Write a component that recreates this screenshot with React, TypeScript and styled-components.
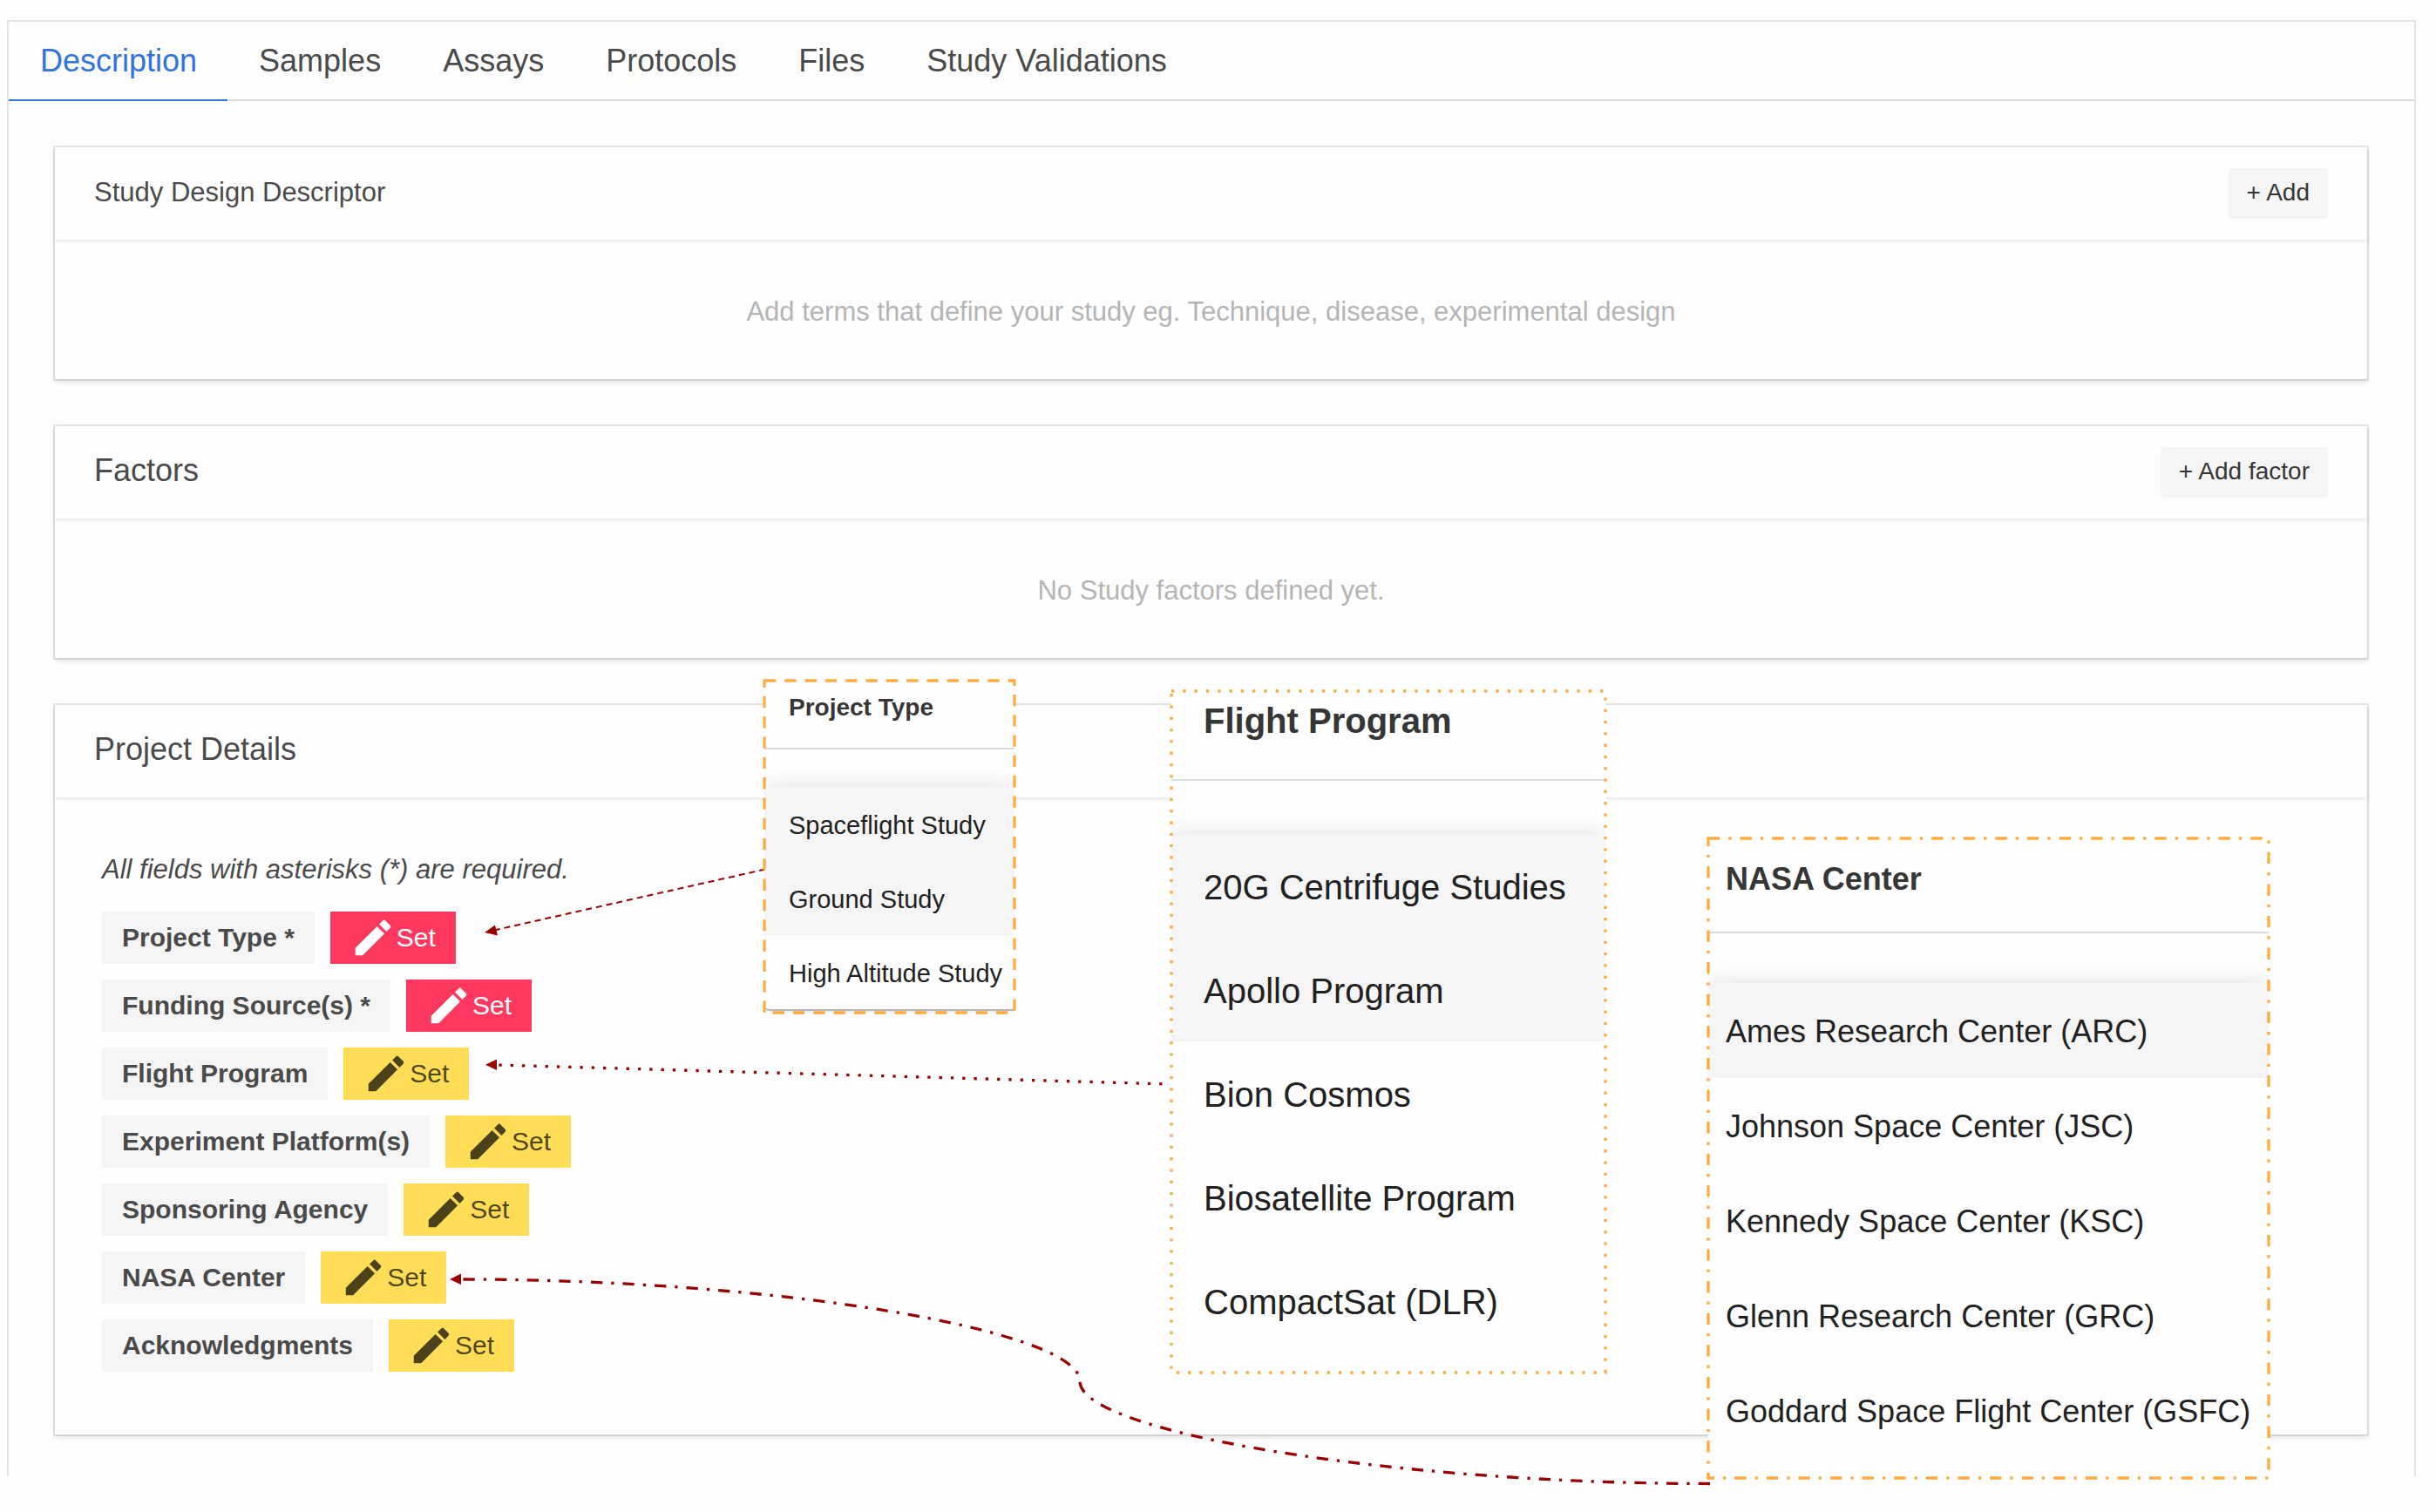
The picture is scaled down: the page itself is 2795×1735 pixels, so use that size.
import React from "react";
import styled, { createGlobalStyle, css } from "styled-components";

const GlobalStyle = createGlobalStyle`
  *, *::before, *::after { box-sizing: border-box; }
  body {
    margin: 0;
    background: #fefefe;
    color: #4a4a4a;
    font-family: "Liberation Sans", Arial, Helvetica, sans-serif;
    font-size: 31px;
  }
  button { font-family: inherit; cursor: pointer; }
`;

const Page = styled.div`
  position: relative;
  padding: 23px 23px 40px 8px;
`;

const StudyPanel = styled.main`
  border: 2px solid #e4e4e4;
  border-bottom: 0;
`;

const TabBar = styled.nav`
  display: flex;
  border-bottom: 2px solid #dbdbdb;
`;

const Tab = styled.a<{ $active?: boolean }>`
  padding: 0 35px 0 36px;
  margin-bottom: -2px;
  font-size: 36px;
  line-height: 89px;
  text-decoration: none;
  border-bottom: 2px solid ${(p) => (p.$active ? "#3273dc" : "transparent")};
  color: ${(p) => (p.$active ? "#3273dc" : "#4a4a4a")};
`;

const Sections = styled.div`
  display: flex;
  flex-direction: column;
  gap: 54px;
  padding: 53px 54px 48px 53px;
`;

const Card = styled.section`
  box-shadow: 0 4px 6px rgba(10, 10, 10, 0.1), 0 0 0 2px rgba(10, 10, 10, 0.1);
`;

const CardHeader = styled.header`
  display: flex;
  align-items: center;
  justify-content: space-between;
  min-height: 106px;
  padding: 0 45px;
  box-shadow: 0 2px 4px rgba(10, 10, 10, 0.1);
`;

const CardTitle = styled.h2<{ $small?: boolean }>`
  margin: 0;
  padding-bottom: ${(p) => (p.$small ? 2 : 4)}px;
  font-weight: 400;
  font-size: ${(p) => (p.$small ? 31 : 36)}px;
  line-height: 48px;
`;

const AddButton = styled.button`
  height: 58px;
  padding: 0 21px 2px;
  border: 0;
  border-radius: 4px;
  background: #f5f5f5;
  color: #363636;
  font-size: 28px;
`;

const EmptyText = styled.p`
  margin: 0;
  padding: 59px 54px 53px;
  line-height: 48px;
  text-align: center;
  color: #b5b5b5;
`;

const Details = styled.div`
  padding: 55px 54px 72px;
`;

const Note = styled.p`
  margin: 0 0 20px;
  font-style: italic;
  line-height: 56px;
`;

const FieldList = styled.div`
  display: flex;
  flex-direction: column;
  gap: 18px;
`;

const FieldRow = styled.div`
  display: flex;
  gap: 18px;
`;

const FieldTag = styled.span`
  padding: 0 23px;
  background: #f5f5f5;
  font-size: 30px;
  font-weight: 700;
  line-height: 60px;
  white-space: nowrap;
`;

const SetButton = styled.button<{ $required?: boolean }>`
  display: flex;
  align-items: center;
  height: 60px;
  padding: 0 23px 0 22px;
  border: 0;
  font-size: 30px;
  background: ${(p) => (p.$required ? "#ff3860" : "#ffdd57")};
  color: ${(p) => (p.$required ? "#fff" : "rgba(0, 0, 0, 0.7)")};
`;

const Popup = styled.aside<{ $x: number; $y: number; $w: number; $h: number }>`
  position: absolute;
  left: ${(p) => p.$x}px;
  top: ${(p) => p.$y}px;
  width: ${(p) => p.$w}px;
  height: ${(p) => p.$h}px;
`;

const PopupBody = styled.div`
  display: flex;
  flex-direction: column;
  height: 100%;
  overflow: hidden;
  background: #fefefe;
`;

const PopupTitle = styled.h3<{ $h: number; $pad: number; $drop: number; $size: number }>`
  flex: none;
  margin: 0;
  height: ${(p) => p.$h}px;
  padding: ${(p) => p.$drop}px ${(p) => p.$pad}px 0;
  border-bottom: 2px solid #dbdbdb;
  color: #363636;
  font-size: ${(p) => p.$size}px;
  font-weight: 700;
  line-height: 48px;
`;

const Options = styled.ul<{ $gap: number; $edge?: boolean }>`
  margin: ${(p) => p.$gap}px 0 0;
  padding: 0;
  list-style: none;
  background: #fefefe;
  box-shadow: 0 0 24px rgba(0, 0, 0, 0.12);
  ${(p) =>
    p.$edge
      ? css`
          border-bottom: 2px solid #b8b8b8;
          border-bottom-left-radius: 6px;
        `
      : css`
          flex: 1;
        `}
`;

const Option = styled.button<{ $h: number; $pad: number; $shaded: boolean; $size: number }>`
  display: block;
  width: 100%;
  height: ${(p) => p.$h}px;
  padding: 3px 0 0 ${(p) => p.$pad}px;
  border: 0;
  background: ${(p) => (p.$shaded ? "#f5f5f5" : "transparent")};
  color: #212121;
  font-size: ${(p) => p.$size}px;
  text-align: left;
  white-space: nowrap;
`;

const Outline = styled.svg`
  position: absolute;
  inset: 0;
  overflow: visible;
  pointer-events: none;
`;

const Connectors = styled.svg`
  position: absolute;
  inset: 0;
  width: 100%;
  height: 100%;
  overflow: visible;
  pointer-events: none;
`;

const Pencil = () => (
  <svg width="54" height="54" viewBox="0 0 24 24" fill="currentColor" aria-hidden="true">
    <path d="M3 17.25V21h3.75L17.81 9.94l-3.75-3.75L3 17.25zM20.71 7.04c.39-.39.39-1.02 0-1.41l-2.34-2.34a.996.996 0 0 0-1.41 0l-1.83 1.83 3.75 3.75 1.83-1.83z" />
  </svg>
);

const tabs = ["Description", "Samples", "Assays", "Protocols", "Files", "Study Validations"];

const fields = [
  { label: "Project Type *", required: true },
  { label: "Funding Source(s) *", required: true },
  { label: "Flight Program" },
  { label: "Experiment Platform(s)" },
  { label: "Sponsoring Agency" },
  { label: "NASA Center" },
  { label: "Acknowledgments" },
];

const popups = [
  {
    title: "Project Type",
    x: 877, y: 781, w: 287, h: 381, titleSize: 28, size: 29, pad: 28,
    titleH: 79, drop: 7, gap: 43, rowH: 85, shaded: 2, edge: true,
    dash: "13.3 10",
    items: ["Spaceflight Study", "Ground Study", "High Altitude Study"],
  },
  {
    title: "Flight Program",
    x: 1344, y: 793, w: 498, h: 782, titleSize: 40, size: 40, pad: 37,
    titleH: 103, drop: 10, gap: 61, rowH: 119, shaded: 2, edge: false,
    dash: "3.3 10",
    items: ["20G Centrifuge Studies", "Apollo Program", "Bion Cosmos", "Biosatellite Program", "CompactSat (DLR)"],
  },
  {
    title: "NASA Center",
    x: 1960, y: 962, w: 643, h: 734, titleSize: 36, size: 36, pad: 20,
    titleH: 109, drop: 23, gap: 57, rowH: 109, shaded: 1, edge: false,
    dash: "13.3 10 3.3 10",
    items: [
      "Ames Research Center (ARC)",
      "Johnson Space Center (JSC)",
      "Kennedy Space Center (KSC)",
      "Glenn Research Center (GRC)",
      "Goddard Space Flight Center (GSFC)",
    ],
  },
];

export default function App() {
  return (
    <Page>
      <GlobalStyle />
      <StudyPanel>
        <TabBar>
          {tabs.map((t, i) => (
            <Tab key={t} href="#" $active={i === 0}>
              {t}
            </Tab>
          ))}
        </TabBar>
        <Sections>
          <Card>
            <CardHeader>
              <CardTitle $small>Study Design Descriptor</CardTitle>
              <AddButton type="button">+ Add</AddButton>
            </CardHeader>
            <EmptyText>Add terms that define your study eg. Technique, disease, experimental design</EmptyText>
          </Card>
          <Card>
            <CardHeader>
              <CardTitle>Factors</CardTitle>
              <AddButton type="button">+ Add factor</AddButton>
            </CardHeader>
            <EmptyText>No Study factors defined yet.</EmptyText>
          </Card>
          <Card>
            <CardHeader>
              <CardTitle>Project Details</CardTitle>
            </CardHeader>
            <Details>
              <Note>All fields with asterisks (*) are required.</Note>
              <FieldList>
                {fields.map((f) => (
                  <FieldRow key={f.label}>
                    <FieldTag>{f.label}</FieldTag>
                    <SetButton type="button" $required={f.required}>
                      <Pencil />
                      Set
                    </SetButton>
                  </FieldRow>
                ))}
              </FieldList>
            </Details>
          </Card>
        </Sections>
      </StudyPanel>

      <Connectors fill="none" stroke="#990000" aria-hidden="true">
        <path d="M878 997.5L569 1067" strokeWidth="2" strokeDasharray="7 5" />
        <path d="M556 1070L568 1061.5L571 1073.5Z" fill="#990000" stroke="none" />
        <path d="M1333.5 1243.8L570 1222" strokeWidth="3.3" strokeDasharray="3.3 10" />
        <path d="M557 1221.7L570 1215.5V1228Z" fill="#990000" stroke="none" />
        <path
          d="M1962 1702.5C1600 1702.5 1239 1644 1239 1585C1239 1526 890 1468 529 1468"
          strokeWidth="3.3"
          strokeDasharray="13.3 10 3.3 10"
        />
        <path d="M516 1468L529 1461.5V1474Z" fill="#990000" stroke="none" />
      </Connectors>

      {popups.map((p) => (
        <Popup key={p.title} $x={p.x} $y={p.y} $w={p.w} $h={p.h}>
          <PopupBody>
            <PopupTitle $h={p.titleH} $pad={p.pad} $drop={p.drop} $size={p.titleSize}>
              {p.title}
            </PopupTitle>
            <Options $gap={p.gap} $edge={p.edge}>
              {p.items.map((item, i) => (
                <li key={item}>
                  <Option type="button" $h={p.rowH} $pad={p.pad} $shaded={i < p.shaded} $size={p.size}>
                    {item}
                  </Option>
                </li>
              ))}
            </Options>
          </PopupBody>
          <Outline width={p.w} height={p.h} aria-hidden="true">
            <rect
              width={p.w}
              height={p.h}
              fill="none"
              stroke="#ffab40"
              strokeWidth="3.3"
              strokeDasharray={p.dash}
            />
          </Outline>
        </Popup>
      ))}
    </Page>
  );
}
